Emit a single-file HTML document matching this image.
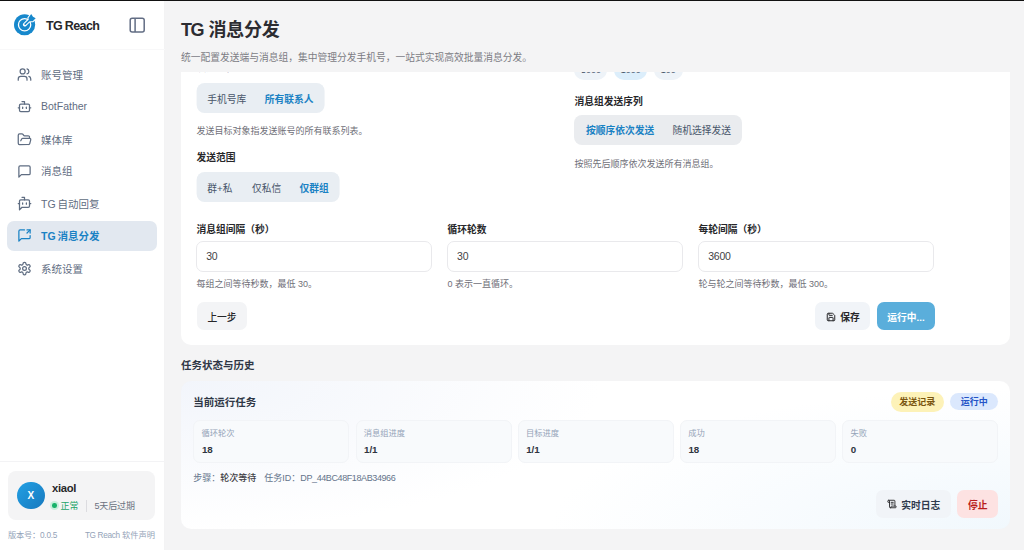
<!DOCTYPE html>
<html lang="zh-CN">
<head>
<meta charset="utf-8">
<title>TG Reach - TG 消息分发</title>
<style>
*{box-sizing:border-box;margin:0;padding:0}
html,body{width:1024px;height:550px;overflow:hidden;background:#f4f4f5}
body{font-family:"Liberation Sans","Noto Sans CJK SC",sans-serif;color:#1f2937;position:relative;font-size:10px}
.topline{position:absolute;left:0;top:0;width:1024px;height:1px;background:#111;z-index:9}
/* sidebar */
.sidebar{position:absolute;left:0;top:0;width:165px;height:550px;background:#fff;border-right:1px solid #f3f3f4}
.brand{position:absolute;left:46px;top:18px;font-size:12.5px;font-weight:700;color:#27272a;line-height:16px;white-space:nowrap;letter-spacing:-0.55px;word-spacing:-0.5px}
.hsep{position:absolute;left:0;top:49px;width:165px;height:1px;background:#f8f8f9}
.nav a{position:absolute;left:7px;width:150px;height:30px;border-radius:7px;color:#5f6d82;font-size:10.5px;line-height:30.6px;padding-left:34px;text-decoration:none;white-space:nowrap;word-spacing:-1px}
.nav a svg{position:absolute;left:9.6px;top:7.2px;width:15px;height:15px;fill:none;stroke:currentColor;stroke-width:2;stroke-linecap:round;stroke-linejoin:round}
.nav a.on{background:#e2e8f0;color:#1a82c4;font-weight:700}
.fsep{position:absolute;left:0;top:461px;width:165px;height:1px;background:#f3f3f5}
.user{position:absolute;left:8px;top:471px;width:147px;height:49.4px;border-radius:8px;background:#f4f4f5}
.avatar{position:absolute;left:9px;top:10.8px;width:27.6px;height:27.6px;border-radius:50%;background:linear-gradient(135deg,#22a0e4,#1879be);color:#fff;font-weight:700;font-size:10px;line-height:27.6px;text-align:center}
.uname{position:absolute;left:44px;top:8.7px;font-size:11.25px;font-weight:700;color:#27272a;line-height:16px;letter-spacing:-0.3px}
.dot{position:absolute;left:42px;top:30.2px;width:9px;height:9px;border-radius:50%;background:#c6efdb}
.dot:after{content:"";position:absolute;left:2.2px;top:2.2px;width:4.6px;height:4.6px;border-radius:50%;background:#17b26a}
.ustat{position:absolute;left:52.6px;top:28px;font-size:9px;line-height:14px;color:#1da468;white-space:nowrap}
.vsep{position:absolute;left:78.4px;top:28.8px;width:1px;height:12px;background:#dcdce0}
.uexp{position:absolute;left:86.4px;top:28px;font-size:9px;line-height:14px;color:#6b7280;white-space:nowrap;letter-spacing:-0.1px}
.ver{position:absolute;left:8px;top:528.8px;font-size:8.25px;line-height:14px;color:#94a3b8;white-space:nowrap;letter-spacing:-0.25px}
.decl{position:absolute;right:9px;top:528.8px;font-size:8.25px;line-height:14px;color:#94a3b8;white-space:nowrap}
.decl i{font-style:normal;letter-spacing:-0.35px}
/* main */
h1{position:absolute;left:181px;top:17px;font-size:18px;line-height:26px;font-weight:700;color:#2c2c31;white-space:nowrap;word-spacing:0.9px;letter-spacing:-0.3px}
h1 span{letter-spacing:-1.5px}
.sub{position:absolute;left:181px;top:50.7px;font-size:9.75px;line-height:14px;color:#7c7c84;white-space:nowrap}
.card{position:absolute;left:181px;width:829px;background:#fff}
.c1{top:72px;height:273px;border-radius:0 0 10px 10px;overflow:hidden}
.c2{top:381px;height:148px;border-radius:10px;background:radial-gradient(ellipse 420px 150px at 0 0,#f2f5fb 0%,rgba(255,255,255,0) 100%),radial-gradient(ellipse 460px 140px at 100% 100%,#f1f8fd 0%,rgba(255,255,255,0) 100%),#fff}
.lbl{position:absolute;font-size:9.75px;line-height:14px;font-weight:700;color:#27272a;white-space:nowrap}
.help{position:absolute;font-size:9px;line-height:12px;color:#6f6f78;white-space:nowrap}
.seg{position:absolute;height:30px;border-radius:8px;background:#e9eef3;display:flex;align-items:center;padding:1.6px 10.9px 0 10.7px;gap:18.4px;font-size:9.75px;color:#475569;white-space:nowrap}
.seg b{color:#1a82c4;font-weight:700}
.inp{position:absolute;top:169px;height:31px;width:235.4px;border:1px solid #e9e9ec;border-radius:7px;background:#fff;font-size:10.5px;line-height:29.2px;padding-left:8.8px;color:#3f3f46;letter-spacing:-0.2px}
.btn{position:absolute;height:28px;border-radius:7px;background:#f1f4f8;font-size:9.75px;font-weight:700;color:#27272a;line-height:31.5px;text-align:center;white-space:nowrap}
.chip{position:absolute;top:-12px;height:20px;border-radius:10px;background:#eef3f8;font-size:9px;line-height:21px;color:#475569;text-align:center}
.badge{position:absolute;border-radius:10px;font-size:9px;font-weight:700;text-align:center;white-space:nowrap}
.stat{position:absolute;top:39.3px;height:42.4px;width:156.2px;border:1px solid #f2f4f7;border-radius:7px;background:#f8fafc}
.stat span{position:absolute;left:7.3px;top:7.2px;font-size:8.25px;line-height:12px;color:#94a3b8;white-space:nowrap}
.stat b{position:absolute;left:7.6px;top:21.7px;font-size:9.75px;line-height:14px;color:#2f3540;font-weight:700;letter-spacing:-0.1px}
</style>
</head>
<body>
<div class="sidebar">
  <svg style="position:absolute;left:13px;top:13px" width="24" height="24" viewBox="0 0 24 24">
    <circle cx="11.6" cy="11.75" r="10.6" fill="#1788cc"/>
    <circle cx="11.6" cy="11.75" r="6.15" fill="none" stroke="#fff" stroke-width="1.3"/>
    <circle cx="11.6" cy="11.75" r="1.3" fill="#fff"/>
    <path d="M11.8 11.6 L16.5 6.9" stroke="#fff" stroke-width="3.8" stroke-linecap="round"/>
    <path d="M18.2 1 L20 3.7 L22.7 5.2 L19.7 8.3 L16.3 8.3 L15.4 4.9 Z" fill="#fff" stroke="#fff" stroke-width="2" stroke-linejoin="round"/>
    <path d="M12.2 11.2 L17 6.6" stroke="#1788cc" stroke-width="1.7" stroke-linecap="round"/>
    <path d="M18.2 1 L20 3.7 L22.7 5.2 L19.7 8.3 L16.3 8.3 L15.4 4.9 Z" fill="#1788cc"/>
  </svg>
  <div class="brand">TG Reach</div>
  <svg style="position:absolute;left:129px;top:17px" width="17" height="17" viewBox="0 0 17 17" fill="none" stroke="#626d84" stroke-width="1.5" stroke-linejoin="round"><rect x="1.2" y="1.3" width="14" height="13.8" rx="2"/><path d="M6.1 1.3v13.8"/></svg>
  <div class="hsep"></div>
  <nav class="nav">
    <a style="top:59.8px"><svg viewBox="0 0 24 24"><path d="M16 21v-2a4 4 0 0 0-4-4H6a4 4 0 0 0-4 4v2"/><circle cx="9" cy="7" r="4"/><path d="M22 21v-2a4 4 0 0 0-3-3.87"/><path d="M16 3.13a4 4 0 0 1 0 7.75"/></svg>账号管理</a>
    <a style="top:92.1px;line-height:29.4px"><svg viewBox="0 0 24 24"><path d="M12 8V4H8"/><rect width="16" height="12" x="4" y="8" rx="2"/><path d="M2 14h2"/><path d="M20 14h2"/><path d="M15 13v2"/><path d="M9 13v2"/></svg>BotFather</a>
    <a style="top:124.5px"><svg viewBox="0 0 24 24"><path d="m6 14 1.5-2.9A2 2 0 0 1 9.24 10H20a2 2 0 0 1 1.94 2.5l-1.54 6a2 2 0 0 1-1.95 1.5H4a2 2 0 0 1-2-2V5a2 2 0 0 1 2-2h3.9a2 2 0 0 1 1.69.9l.81 1.2a2 2 0 0 0 1.67.9H18a2 2 0 0 1 2 2v2"/></svg>媒体库</a>
    <a style="top:156.4px"><svg viewBox="0 0 24 24"><path d="M21 15a2 2 0 0 1-2 2H7l-4 4V5a2 2 0 0 1 2-2h14a2 2 0 0 1 2 2z"/></svg>消息组</a>
    <a style="top:189.1px"><svg viewBox="0 0 24 24"><path d="M12 6V2H8"/><path d="m8 18-4 4V8a2 2 0 0 1 2-2h12a2 2 0 0 1 2 2v8a2 2 0 0 1-2 2Z"/><path d="M2 12h2"/><path d="M9 11v2"/><path d="M15 11v2"/><path d="M20 12h2"/></svg>TG 自动回复</a>
    <a class="on" style="top:220.8px"><svg viewBox="0 0 24 24"><path d="M21 12v3a2 2 0 0 1-2 2H7l-4 4V5a2 2 0 0 1 2-2h7"/><path d="M16 3h5v5"/><path d="m16 8 5-5"/></svg>TG 消息分发</a>
    <a style="top:254px"><svg viewBox="0 0 24 24"><path d="M12.22 2h-.44a2 2 0 0 0-2 2v.18a2 2 0 0 1-1 1.73l-.43.25a2 2 0 0 1-2 0l-.15-.08a2 2 0 0 0-2.73.73l-.22.38a2 2 0 0 0 .73 2.73l.15.1a2 2 0 0 1 1 1.72v.51a2 2 0 0 1-1 1.74l-.15.09a2 2 0 0 0-.73 2.73l.22.38a2 2 0 0 0 2.73.73l.15-.08a2 2 0 0 1 2 0l.43.25a2 2 0 0 1 1 1.73V20a2 2 0 0 0 2 2h.44a2 2 0 0 0 2-2v-.18a2 2 0 0 1 1-1.73l.43-.25a2 2 0 0 1 2 0l.15.08a2 2 0 0 0 2.73-.73l.22-.39a2 2 0 0 0-.73-2.73l-.15-.08a2 2 0 0 1-1-1.74v-.5a2 2 0 0 1 1-1.74l.15-.09a2 2 0 0 0 .73-2.73l-.22-.38a2 2 0 0 0-2.73-.73l-.15.08a2 2 0 0 1-2 0l-.43-.25a2 2 0 0 1-1-1.73V4a2 2 0 0 0-2-2z"/><circle cx="12" cy="12" r="3"/></svg>系统设置</a>
  </nav>
  <div class="fsep"></div>
  <div class="user">
    <div class="avatar">X</div>
    <div class="uname">xiaol</div>
    <div class="dot"></div>
    <div class="ustat">正常</div>
    <div class="vsep"></div>
    <div class="uexp">5天后过期</div>
  </div>
  <div class="ver">版本号：0.0.5</div>
  <div class="decl"><i>TG Reach</i> 软件声明</div>
</div>

<h1><span>TG</span> 消息分发</h1>
<div class="sub">统一配置发送端与消息组，集中管理分发手机号，一站式实现高效批量消息分发。</div>

<section class="card c1">
  <div class="lbl" style="left:15.6px;top:-11px;color:#52525b">发送目标</div>
  <div class="seg" style="left:16px;top:11px;transform:translateX(-0.4px)"><span>手机号库</span><b>所有联系人</b></div>
  <div class="help" style="left:15.4px;top:53.4px">发送目标对象指发送账号的所有联系列表。</div>
  <div class="lbl" style="left:15.4px;top:79px">发送范围</div>
  <div class="seg" style="left:16px;top:100px;transform:translateX(-0.4px)"><span style="margin-right:1px">群+私</span><span>仅私信</span><b>仅群组</b></div>

  <div class="chip" style="left:393.4px;width:33px">5000</div>
  <div class="chip" style="left:433px;width:33.4px;background:#dceefb">1000</div>
  <div class="chip" style="left:472.7px;width:29.4px">100</div>
  <div class="lbl" style="left:393.4px;top:22.7px">消息组发送序列</div>
  <div class="seg" style="left:393.4px;top:43px;background:#eaecef;padding:0.4px 11.4px 0 11.5px"><b>按顺序依次发送</b><span>随机选择发送</span></div>
  <div class="help" style="left:393.4px;top:85.9px">按照先后顺序依次发送所有消息组。</div>

  <div class="lbl" style="left:15.4px;top:151.4px">消息组间隔（秒）</div>
  <div class="inp" style="left:15.4px">30</div>
  <div class="help" style="left:15.4px;top:206.3px">每组之间等待秒数，最低 30。</div>
  <div class="lbl" style="left:266.4px;top:151.4px">循环轮数</div>
  <div class="inp" style="left:266.3px">30</div>
  <div class="help" style="left:266.4px;top:206.3px">0 表示一直循环。</div>
  <div class="lbl" style="left:517.4px;top:151.4px">每轮间隔（秒）</div>
  <div class="inp" style="left:517.4px">3600</div>
  <div class="help" style="left:517.4px;top:206.3px">轮与轮之间等待秒数，最低 300。</div>

  <div class="btn" style="left:16px;top:230px;width:50px;font-weight:500;background:#f3f4f6">上一步</div>
  <div class="btn" style="left:634px;top:230px;width:55px;padding-left:15px">保存<svg style="position:absolute;left:10.6px;top:9.6px" width="10" height="10" viewBox="0 0 24 24" fill="none" stroke="#27272a" stroke-width="2.4" stroke-linecap="round" stroke-linejoin="round"><path d="M15.2 3a2 2 0 0 1 1.4.6l3.8 3.8a2 2 0 0 1 .6 1.4V19a2 2 0 0 1-2 2H5a2 2 0 0 1-2-2V5a2 2 0 0 1 2-2z"/><path d="M17 21v-7a1 1 0 0 0-1-1H8a1 1 0 0 0-1 1v7"/><path d="M7 3v4a1 1 0 0 0 1 1h7"/></svg></div>
  <div class="btn" style="left:696px;top:230px;width:58px;background:#5aaedb;color:#fff">运行中...</div>
</section>

<div class="lbl" style="left:181px;top:358.2px;font-size:10.5px;color:#2f3746">任务状态与历史</div>

<section class="card c2">
  <div class="lbl" style="left:12.3px;top:14.4px;font-size:10.5px;color:#2f3746">当前运行任务</div>
  <div class="badge" style="left:710px;top:11px;width:52.7px;height:19.6px;line-height:20.6px;background:#fdf2b8;color:#7a5510">发送记录</div>
  <div class="badge" style="left:769.2px;top:12.2px;width:48px;height:17.2px;line-height:18.2px;background:#dbe8fd;color:#2554c7">运行中</div>
  <div class="stat" style="left:12.3px"><span>循环轮次</span><b>18</b></div>
  <div class="stat" style="left:174.5px"><span>消息组进度</span><b>1/1</b></div>
  <div class="stat" style="left:336.7px"><span>目标进度</span><b>1/1</b></div>
  <div class="stat" style="left:498.9px"><span>成功</span><b>18</b></div>
  <div class="stat" style="left:661.1px"><span>失败</span><b>0</b></div>
  <div class="help" style="left:12.3px;top:90.6px;color:#64748b">步骤：<b style="color:#3f3f46;font-weight:500">轮次等待</b><span style="margin-left:8px">任务ID：</span><span style="letter-spacing:-0.4px">DP_44BC48F18AB34966</span></div>
  <div class="btn" style="left:695px;top:109px;width:74.6px;padding-left:15px;color:#2f3a4d">实时日志<svg style="position:absolute;left:11.2px;top:9.2px" width="10" height="10" viewBox="0 0 24 24" fill="none" stroke="#27272a" stroke-width="2.2" stroke-linecap="round" stroke-linejoin="round"><path d="M15 12h-5"/><path d="M15 8h-5"/><path d="M19 17V5a2 2 0 0 0-2-2H4"/><path d="M8 21h12a2 2 0 0 0 2-2v-1a1 1 0 0 0-1-1H11a1 1 0 0 0-1 1v1a2 2 0 1 1-4 0V5a2 2 0 1 0-4 0v2a1 1 0 0 0 1 1h3"/></svg></div>
  <div class="btn" style="left:776.4px;top:109px;width:40.8px;background:#fde2e2;color:#b91c1c">停止</div>
</section>
<div class="topline"></div>
</body>
</html>
